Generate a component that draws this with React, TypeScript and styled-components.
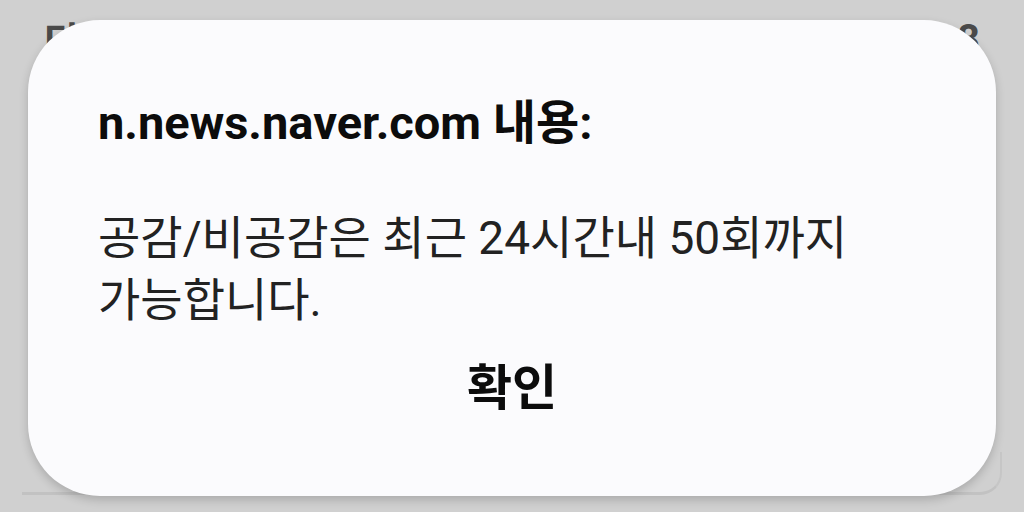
import React from "react";
import styled, { createGlobalStyle } from "styled-components";

const GlobalStyle = createGlobalStyle`
  html, body {
    margin: 0;
    padding: 0;
    background: #d0d0d0;
  }
  #root {
    height: 512px;
  }
`;

const Page = styled.div`
  position: relative;
  height: 512px;
  overflow: hidden;
  background: #d0d0d0;
  font-family: Roboto, "Noto Sans CJK KR", sans-serif;
`;

const TopBar = styled.div`
  display: flex;
  justify-content: space-between;
  align-items: center;
  padding: 10px 44px 0 44px;
  color: #4a4a4a;
  font-size: 40px;
  font-weight: 700;
`;

const BottomCard = styled.div`
  position: absolute;
  left: 22px;
  right: 22px;
  bottom: 17px;
  height: 40px;
  border-bottom: 3px solid #c2c2c2;
  border-right: 2px solid #c6c6c6;
  border-radius: 0 0 22px 0;
`;

const Overlay = styled.div`
  position: absolute;
  inset: 0;
  display: flex;
  justify-content: center;
  align-items: flex-start;
  padding-top: 20px;
`;

const Dialog = styled.div`
  box-sizing: border-box;
  width: 968px;
  height: 476px;
  background: #fbfbfd;
  border-radius: 72px;
  box-shadow: 0 4px 10px rgba(0, 0, 0, 0.18);
  padding: 76px 70px 0 70px;
  display: flex;
  flex-direction: column;
`;

const Title = styled.h2`
  margin: 0;
  font-size: 47px;
  font-weight: 700;
  line-height: 54px;
  color: #0c0c0c;
`;

const Message = styled.p`
  margin: 57px 0 0 0;
  font-size: 46px;
  font-weight: 400;
  line-height: 62px;
  color: #222;
  word-break: keep-all;
`;

const Actions = styled.div`
  display: flex;
  justify-content: center;
  margin-top: 30px;
`;

const ConfirmButton = styled.button`
  border: none;
  background: transparent;
  padding: 0 12px;
  font-family: inherit;
  font-size: 49px;
  font-weight: 700;
  line-height: 56px;
  color: #0c0c0c;
`;

export default function App() {
  return (
    <>
      <GlobalStyle />
      <Page>
        <TopBar>
          <span>다</span>
          <span>8</span>
        </TopBar>
        <BottomCard />
        <Overlay>
          <Dialog>
            <Title>n.news.naver.com 내용:</Title>
            <Message>공감/비공감은 최근 24시간내 50회까지 가능합니다.</Message>
            <Actions>
              <ConfirmButton>확인</ConfirmButton>
            </Actions>
          </Dialog>
        </Overlay>
      </Page>
    </>
  );
}
